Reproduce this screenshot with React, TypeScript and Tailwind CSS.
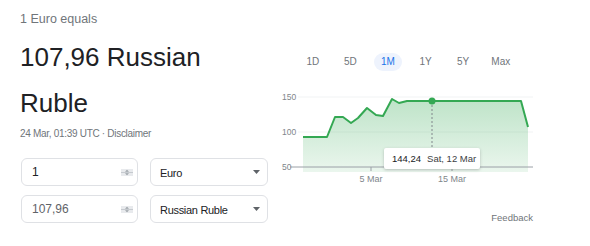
const points: [number, number][] = [
  [23, 52],
  [47, 52],
  [55, 32],
  [63, 32],
  [71, 38],
  [78, 33],
  [87, 23],
  [96, 30],
  [103, 31],
  [112, 14],
  [119, 18],
  [127, 16],
  [152, 16],
  [241, 16],
  [248, 42],
]

const tabs = ['1D', '5D', '1M', '1Y', '5Y', 'Max']

function Stepper() {
  return (
    <svg width="12" height="7" viewBox="0 0 12 7" className="shrink-0">
      <rect x="0" y="0" width="12" height="7" fill="#e8eaed" />
      <path d="M6 0.8 L8 2.8 H4 Z" fill="#9aa0a6" />
      <path d="M6 6.2 L8 4.2 H4 Z" fill="#9aa0a6" />
      <line x1="0" y1="3.5" x2="12" y2="3.5" stroke="#bdc1c6" strokeWidth="0.8" />
    </svg>
  )
}

function AmountInput({ value, dark }: { value: string; dark?: boolean }) {
  return (
    <div className="flex items-center w-[117px] h-[28px] border border-[#dfe1e5] rounded-[6px] pl-[10px] pr-[4px]">
      <span
        className={`flex-1 text-[12px] leading-none ${dark ? 'text-[#202124]' : 'text-[#5f6368]'}`}
      >
        {value}
      </span>
      <Stepper />
    </div>
  )
}

function CurrencySelect({ label }: { label: string }) {
  return (
    <div className="flex items-center w-[118px] h-[28px] border border-[#dfe1e5] rounded-[6px] pl-[9px] pr-[7px]">
      <span className="flex-1 text-[11px] tracking-[-0.3px] leading-none text-[#202124] pt-[3px]">
        {label}
      </span>
      <svg width="7" height="4" viewBox="0 0 7 4">
        <path d="M0 0 H7 L3.5 4 Z" fill="#5f6368" />
      </svg>
    </div>
  )
}

function Chart() {
  const line = points.map(([x, y]) => `${x},${y}`).join(' ')
  const area = `${line} 248,87 23,87`
  return (
    <div className="relative w-[256px] h-[105px]">
      <svg width="256" height="105" viewBox="0 0 256 105">
        <defs>
          <linearGradient id="fill" x1="0" y1="0" x2="0" y2="1">
            <stop offset="0%" stopColor="#34a853" stopOpacity="0.32" />
            <stop offset="100%" stopColor="#34a853" stopOpacity="0.1" />
          </linearGradient>
        </defs>
        <line x1="18" y1="12" x2="253" y2="12" stroke="#f1f3f4" strokeWidth="1" />
        <line x1="18" y1="47" x2="253" y2="47" stroke="#f1f3f4" strokeWidth="1" />
        <polygon points={area} fill="url(#fill)" />
        <line x1="10" y1="82" x2="253" y2="82" stroke="#9aa0a6" strokeWidth="1" />
        <line x1="91" y1="82" x2="91" y2="86" stroke="#9aa0a6" strokeWidth="1" />
        <line x1="172" y1="82" x2="172" y2="86" stroke="#9aa0a6" strokeWidth="1" />
        <line
          x1="152"
          y1="16"
          x2="152"
          y2="64"
          stroke="#80868b"
          strokeWidth="1"
          strokeDasharray="2 2"
        />
        <polyline
          points={line}
          fill="none"
          stroke="#34a853"
          strokeWidth="2"
          strokeLinejoin="round"
        />
        <circle cx="152" cy="16" r="3.5" fill="#34a853" />
        <g fontFamily="Arial, 'Liberation Sans', sans-serif" fontSize="8.5" fill="#80868b">
          <text x="2" y="15">150</text>
          <text x="2" y="50">100</text>
          <text x="2" y="85">50</text>
        </g>
        <g fontFamily="Arial, 'Liberation Sans', sans-serif" fontSize="9" fill="#80868b">
          <text x="91" y="97" textAnchor="middle">
            5 Mar
          </text>
          <text x="172" y="97" textAnchor="middle">
            15 Mar
          </text>
        </g>
      </svg>
      <div className="absolute left-[104px] top-[63px] w-[96px] h-[21px] bg-white rounded-[2px] shadow-[0_1px_3px_rgba(60,64,67,0.3)] flex items-center pl-[8px] text-[9.5px] leading-none whitespace-nowrap">
        <span className="text-[#202124] font-medium">144,24</span>
        <span className="ml-[6px] text-[#3c4043]">Sat, 12 Mar</span>
      </div>
    </div>
  )
}

export default function App() {
  return (
    <div className="w-[590px] h-[246px] bg-white flex font-['Arial','Liberation_Sans',sans-serif]">
      <div className="w-[280px] pl-[20px] pt-[9px]">
        <div className="text-[12.5px] leading-[20px] text-[#70757a]">1 Euro equals</div>
        <div className="mt-[5px] text-[26px] leading-[46px] text-[#202124]">
          107,96 Russian
          <br />
          Ruble
        </div>
        <div className="text-[10px] tracking-[-0.3px] leading-[16px] text-[#70757a]">
          24 Mar, 01:39 UTC · Disclaimer
        </div>
        <div className="mt-[16px] ml-[1px] flex flex-col gap-[9px]">
          <div className="flex gap-[12px]">
            <AmountInput value="1" dark />
            <CurrencySelect label="Euro" />
          </div>
          <div className="flex gap-[12px]">
            <AmountInput value="107,96" />
            <CurrencySelect label="Russian Ruble" />
          </div>
        </div>
      </div>
      <div className="w-[256px] pt-[53px] flex flex-col">
        <div className="flex pl-[14px] h-[18px]">
          {tabs.map((t) => (
            <div key={t} className="w-[37.6px] flex justify-center items-center">
              <span
                className={
                  t === '1M'
                    ? 'h-[18px] px-[7px] rounded-full bg-[#eef3fd] text-[#1a73e8] text-[10px] leading-[18px]'
                    : 'text-[10px] leading-[18px] text-[#70757a]'
                }
              >
                {t}
              </span>
            </div>
          ))}
        </div>
        <div className="mt-[14px]">
          <Chart />
        </div>
        <div className="mt-[20px] pr-[3px] text-right text-[9.5px] leading-[16px] text-[#70757a]">
          Feedback
        </div>
      </div>
    </div>
  )
}
